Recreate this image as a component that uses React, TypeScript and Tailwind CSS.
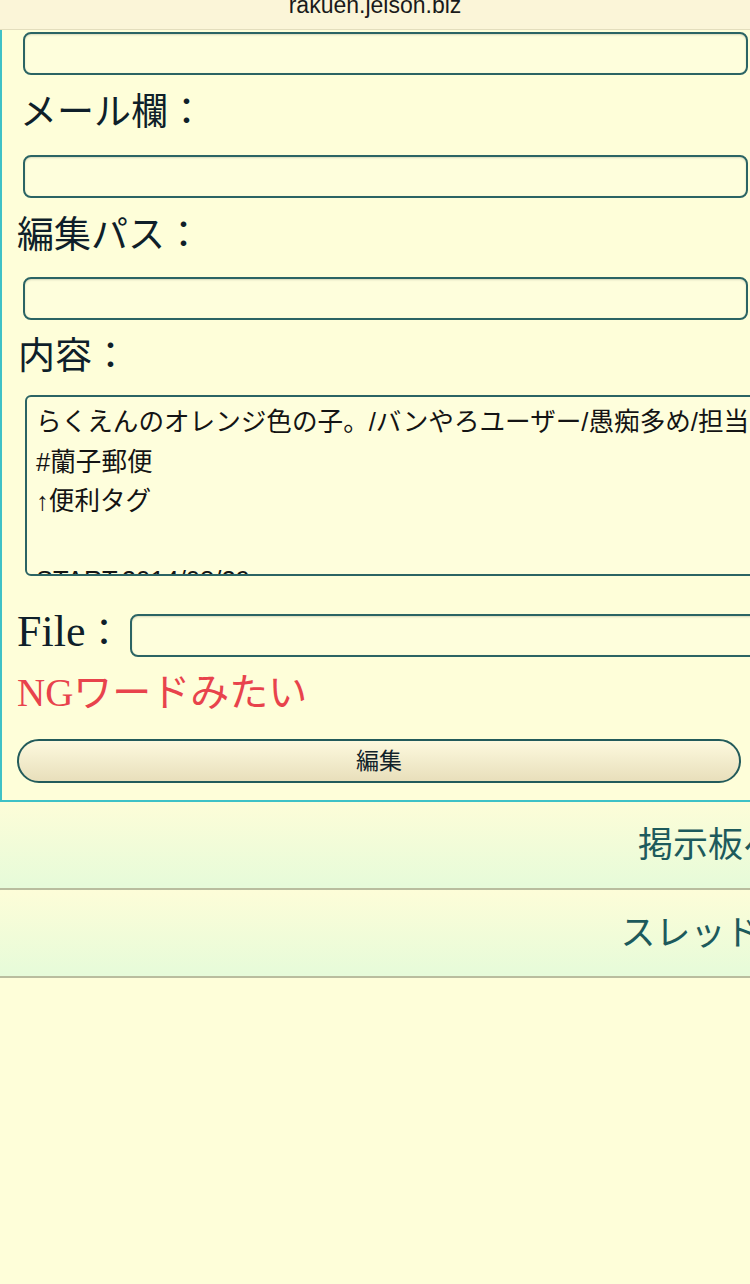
import React from 'react';

const serif = "font-['Liberation_Serif','Noto_Sans_CJK_JP',serif]";
const sans = "font-['Liberation_Sans','Noto_Sans_CJK_JP',sans-serif]";

const fieldClass =
  'block h-[43px] rounded-[8px] border-2 border-[#2b6464] bg-[#fefedc] shadow-[inset_0_1px_2px_rgba(0,0,0,0.15)] outline-none';

const labelClass = `${serif} text-[37px] leading-[38px] text-[#0f1f2a] whitespace-nowrap`;

const bodyText = `らくえんのオレンジ色の子。/バンやろユーザー/愚痴多め/担当はオレンジ色の子たち
#蘭子郵便
↑便利タグ

START:2014/08/29〜`;

const navItems = ['掲示板へ戻る', 'スレッドへ戻る'];

export default function App() {
  return (
    <div className="w-[750px] h-[1284px] overflow-hidden bg-[#fefed9]">
      {/* address bar */}
      <div className="h-[30px] overflow-hidden border-b border-[#e3ddbd] bg-[#fbf5d8] text-center">
        <div className={`${sans} -mt-[6px] text-[23px] leading-none text-[#1a1a1a]`}>rakuen.jeison.biz</div>
      </div>

      {/* edit form */}
      <div className="w-[1500px] border-l-2 border-b-2 border-[#3fc1c6] pl-[15px] pt-[2px] pb-[17px]">
        <input className={`${fieldClass} ml-[6px] w-[725px]`} />
        <div className={`${labelClass} mt-[19px] mb-[23px] pl-[3px]`}>メール欄：</div>
        <input className={`${fieldClass} ml-[6px] w-[725px]`} />
        <div className={`${labelClass} mt-[19px] mb-[22px]`}>編集パス：</div>
        <input className={`${fieldClass} ml-[6px] w-[725px]`} />
        <div className={`${labelClass} mt-[18px] mb-[19px] pl-[1px]`}>内容：</div>
        <textarea
          readOnly
          wrap="off"
          defaultValue={bodyText}
          className={`${sans} ml-[8px] block h-[181px] w-[1400px] resize-none overflow-hidden whitespace-pre rounded-[6px] border-2 border-[#2b6464] bg-[#fefedc] pl-[9px] pt-[6px] text-[25.6px] leading-[39.5px] text-[#141414] outline-none`}
        />

        <div className="mt-[38px] flex items-start">
          <span className={`${serif} -mt-[4px] text-[44px] leading-[44px] text-[#0f1f2a]`}>
            File<span className="text-[37px]">：</span>
          </span>
          <input className={`${fieldClass} ml-[8px] h-[42px] w-[1200px]`} />
        </div>

        <div className={`${serif} mt-[16px] text-[39px] leading-[40px] text-[#e8434c]`}>NGワードみたい</div>

        <button
          type="button"
          className={`${sans} mt-[26px] block h-[44px] w-[724px] rounded-full border-2 border-[#235b5b] bg-gradient-to-b from-[#fdf9de] to-[#e8dfbb] text-[23px] text-[#10222a]`}
        >
          編集
        </button>
      </div>

      {/* footer links */}
      {navItems.map((item) => (
        <div
          key={item}
          className="flex h-[88px] w-[1486px] items-center justify-center border-b-2 border-[#b9bd9e] bg-gradient-to-b from-[#fdfdd8] to-[#e6fbd9]"
        >
          <span className={`${serif} text-[35px] leading-none text-[#1d5a5c]`}>{item}</span>
        </div>
      ))}
    </div>
  );
}
